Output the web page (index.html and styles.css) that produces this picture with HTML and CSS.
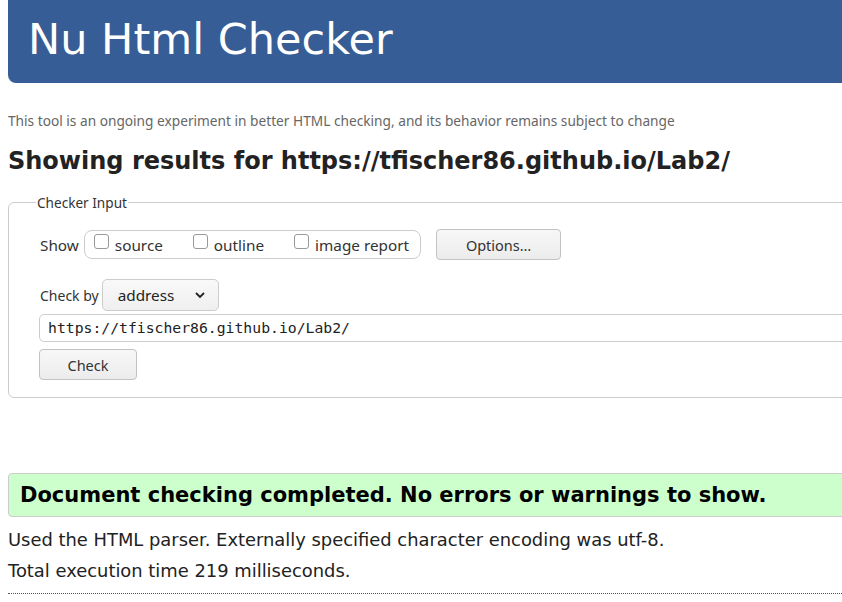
FILE: index.html
```html
<!DOCTYPE html>
<html>
<head>
<meta charset="utf-8">
<link rel="stylesheet" href="styles.css">
</head>
<body>
<div class="page">
  <header class="banner"><h1>Nu Html Checker</h1></header>
  <p class="intro">This tool is an ongoing experiment in better HTML checking, and its behavior remains subject to change</p>
  <h2 class="results">Showing results for https://tfischer86.github.io/Lab2/</h2>
  <fieldset class="checker">
    <legend>Checker Input</legend>
    <div class="row show-row">
      <span class="lbl">Show</span>
      <div class="group">
        <label class="opt"><span class="box"></span>source</label>
        <label class="opt"><span class="box"></span>outline</label>
        <label class="opt"><span class="box"></span>image report</label>
      </div>
      <button class="btn options">Options…</button>
    </div>
    <div class="row by-row">
      <span class="lbl">Check by</span>
      <div class="select">address
        <svg class="chev" width="12" height="8" viewBox="0 0 12 8"><path d="M2 2 L6 6 L10 2" fill="none" stroke="#222" stroke-width="1.8"/></svg>
      </div>
    </div>
    <div class="url">https://tfischer86.github.io/Lab2/</div>
    <button class="btn check">Check</button>
  </fieldset>
  <p class="success">Document checking completed. No errors or warnings to show.</p>
  <p class="details first">Used the HTML parser. Externally specified character encoding was utf-8.</p>
  <p class="details">Total execution time 219 milliseconds.</p>
  <hr class="dots">
</div>
</body>
</html>
```
FILE: styles.css
```css
html, body { margin: 0; padding: 0; background: #fff; overflow: hidden; }
body { font-family: "DejaVu Sans", sans-serif; color: #222; }
.page { width: 900px; padding-left: 8px; }
.banner {
  background: #365d95;
  height: 83px;
  border-radius: 0 0 0 8px;
  display: flex;
  align-items: center;
  padding-left: 20px;
}
.banner h1 {
  margin: 0;
  color: #fff;
  font-weight: normal;
  font-size: 43px;
  font-family: "DejaVu Sans", sans-serif;
  position: relative;
  top: -3px;
}
.intro {
  margin: 28px 0 0 0;
  font-family: "Noto Sans", sans-serif;
  font-size: 13.7px;
  color: #666;
  line-height: 20px;
}
.results {
  margin: 12px 0 0 0;
  font-size: 24px;
  line-height: 36px;
  color: #222;
}
.checker {
  margin: 14px 0 0 0;
  border: 1px solid #ccc;
  border-radius: 6px;
  padding: 0 0 17px 31px;
  font-family: "Noto Sans", sans-serif;
  font-size: 15.3px;
  color: #222;
}
.checker legend { padding: 0 1px; margin-left: -4px; color: #333; font-size: 13.6px; }
.row { display: flex; align-items: center; }
.show-row { margin-top: 17px; }
.lbl { margin-right: 5px; color: #333; }
.group {
  display: flex;
  align-items: center;
  height: 27px;
  border: 1px solid #ccc;
  border-radius: 8px;
  padding: 0 11px 0 9px;
}
.opt { display: flex; align-items: center; margin-right: 30px; color: #333; }
.opt:last-child { margin-right: 0; }
.box {
  width: 13px; height: 13px;
  border: 1px solid #999;
  border-radius: 3px;
  margin-right: 6px;
  position: relative; top: -3px;
}
.btn {
  font-family: "Noto Sans", sans-serif;
  font-size: 14.5px;
  color: #333;
  background: linear-gradient(#f7f7f7, #ececec);
  border: 1px solid #c3c3c3;
  border-radius: 4px;
  height: 31px;
}
.options { margin-left: 15px; width: 125px; }
.by-row { margin-top: 19px; margin-left: -1px; }
.by-row .lbl { font-size: 14px; margin-right: 3px; margin-left: 1px; }
.select {
  display: flex; align-items: center; justify-content: space-between;
  width: 88px; height: 30px;
  padding: 0 12px 0 15px;
  border: 1px solid #ccc;
  border-radius: 5px;
  background: linear-gradient(#f9f9f9, #efefef);
  color: #222;
}
.url {
  margin-top: 3px;
  margin-left: -1px;
  height: 26px;
  border: 1px solid #ccc;
  border-radius: 5px;
  font-family: "DejaVu Sans Mono", monospace;
  font-size: 14.75px;
  line-height: 26px;
  padding-left: 8px;
  color: #222;
  margin-right: -60px;
}
.check { margin-top: 7px; margin-left: -1px; width: 98px; }
.success {
  margin: 75px 0 0 0;
  background: #ccffcc;
  border: 1px solid #ccc;
  border-radius: 4px 0 0 4px;
  height: 42px;
  line-height: 42px;
  padding-left: 11px;
  font-weight: bold;
  font-size: 21px;
  color: #000;
}
.details {
  margin: 0;
  font-size: 17.9px;
  line-height: 31px;
  color: #222;
}
.details.first { margin-top: 7px; }
.dots { margin: 7px 0 0 0; border: 0; border-top: 1px dotted #555; }
```
